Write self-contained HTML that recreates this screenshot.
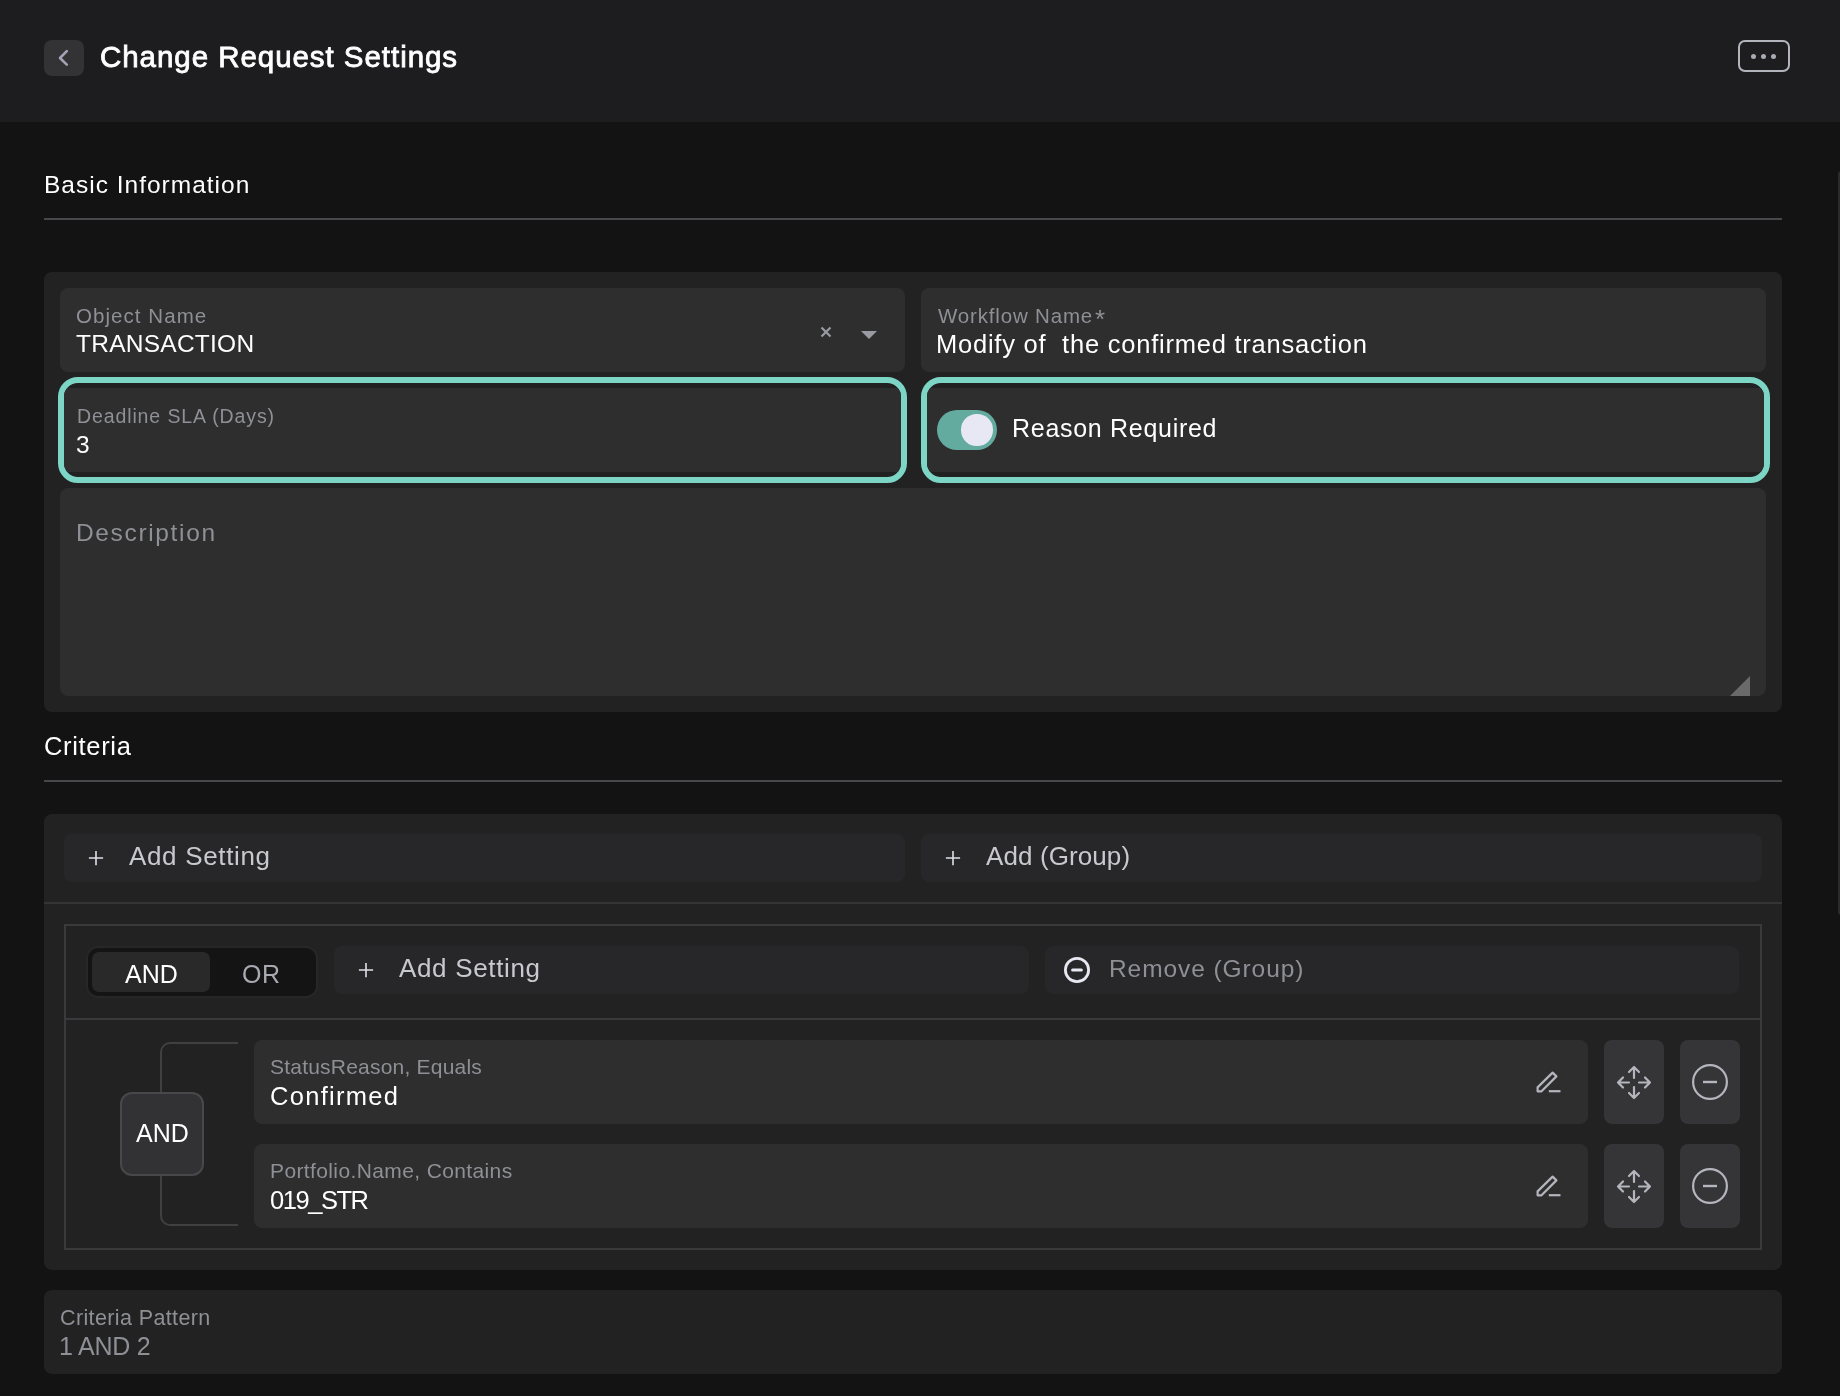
<!DOCTYPE html>
<html><head><meta charset="utf-8">
<style>
*{margin:0;padding:0;box-sizing:border-box}
html,body{width:1840px;height:1396px;overflow:hidden;background:#131313}
body{position:relative;font-family:"Liberation Sans",sans-serif;color:#fff}
.a{position:absolute}
.t{position:absolute;white-space:pre;line-height:1;will-change:transform}
.hdr{left:0;top:0;width:1840px;height:122px;background:#1d1d1f}
.panel{background:#222222;border-radius:8px}
.field{background:#2e2e2e;border-radius:8px}
.lbl{color:#8f9096}
.line{background:#48484c;height:2px}
.btn{background:#27272a;border-radius:8px}
.bt{color:#c8c8cf}
.ring{border:6px solid #7cd5c5;border-radius:20px;background:#212121;overflow:hidden}
.ring>div{position:absolute;left:0;top:5px;width:837px;height:84px;background:#2e2e2e}
.act{background:#353538;border-radius:8px}
</style></head><body>

<!-- header -->
<div class="a hdr"></div>
<div class="a" style="left:44px;top:40px;width:40px;height:36px;background:#333336;border-radius:8px"></div>
<svg class="a" style="left:44px;top:40px" width="40" height="36" viewBox="0 0 40 36"><path d="M22.8 11.2 L16 18 L22.8 24.6" fill="none" stroke="#a3a3b3" stroke-width="2.6" stroke-linecap="round" stroke-linejoin="round"/></svg>
<div class="t" style="left:100px;top:42px;font-size:29.5px;letter-spacing:0.95px;-webkit-text-stroke:0.8px #fff">Change Request Settings</div>
<div class="a" style="left:1738px;top:40px;width:52px;height:32px;border:2px solid #b3b5bd;border-radius:7px"></div>
<div class="a" style="left:1751px;top:54px;width:5px;height:5px;border-radius:50%;background:#a9abb3"></div>
<div class="a" style="left:1761px;top:54px;width:5px;height:5px;border-radius:50%;background:#a9abb3"></div>
<div class="a" style="left:1771px;top:54px;width:5px;height:5px;border-radius:50%;background:#a9abb3"></div>

<!-- Basic information -->
<div class="t" style="left:44px;top:173px;font-size:24.5px;letter-spacing:1px">Basic Information</div>
<div class="a line" style="left:44px;top:218px;width:1738px"></div>

<div class="a panel" style="left:44px;top:272px;width:1738px;height:440px"></div>
<div class="a field" style="left:60px;top:288px;width:845px;height:84px"></div>
<div class="t lbl" style="left:76px;top:305.5px;font-size:20.5px;letter-spacing:1.06px">Object Name</div>
<div class="t" style="left:76px;top:332px;font-size:24.5px;letter-spacing:0.25px">TRANSACTION</div>
<svg class="a" style="left:816px;top:322px" width="20" height="20" viewBox="0 0 20 20"><path d="M5.5 5.5 L14.5 14.5 M14.5 5.5 L5.5 14.5" stroke="#9a9aa2" stroke-width="2.2"/></svg>
<svg class="a" style="left:858px;top:328px" width="22" height="14" viewBox="0 0 22 14"><path d="M3 3 L19 3 L11 11 Z" fill="#9a9aa2"/></svg>

<div class="a field" style="left:921px;top:288px;width:845px;height:84px"></div>
<div class="t lbl" style="left:938px;top:305.5px;font-size:20.5px;letter-spacing:0.83px">Workflow Name</div>
<div class="t lbl" style="left:1095px;top:306px;font-size:26px">*</div>
<div class="t" style="left:936px;top:332.3px;font-size:25.5px;letter-spacing:0.77px">Modify of  the confirmed transaction</div>

<!-- deadline ring -->
<div class="a ring" style="left:58px;top:377px;width:849px;height:106px"><div></div></div>
<div class="t lbl" style="left:76.5px;top:407.4px;font-size:19.5px;letter-spacing:0.89px">Deadline SLA (Days)</div>
<div class="t" style="left:76px;top:433px;font-size:24.5px">3</div>

<div class="a ring" style="left:921px;top:377px;width:849px;height:106px"><div></div></div>
<div class="a" style="left:937px;top:410px;width:60px;height:40px;border-radius:20px;background:#64ab9f"></div>
<div class="a" style="left:961px;top:414px;width:31.5px;height:31.5px;border-radius:50%;background:#e8e8f5"></div>
<div class="t" style="left:1012.4px;top:416.3px;font-size:25px;letter-spacing:0.71px">Reason Required</div>

<div class="a field" style="left:60px;top:488px;width:1706px;height:208px"></div>
<div class="t lbl" style="left:75.5px;top:521.4px;font-size:24.5px;letter-spacing:1.65px">Description</div>
<svg class="a" style="left:1730px;top:676px" width="20" height="20" viewBox="0 0 20 20"><path d="M20 0 L20 20 L0 20 Z" fill="#6a6a6a"/></svg>

<!-- Criteria -->
<div class="t" style="left:43.8px;top:734.3px;font-size:25.5px;letter-spacing:0.67px">Criteria</div>
<div class="a line" style="left:44px;top:780px;width:1738px"></div>

<div class="a panel" style="left:44px;top:814px;width:1738px;height:456px"></div>
<div class="a btn" style="left:64px;top:834px;width:841px;height:48px"></div>
<svg class="a" style="left:88px;top:850px" width="16" height="16" viewBox="0 0 16 16"><path d="M8 1 V15.2 M0.9 8 H15.1" stroke="#e0e0e8" stroke-width="1.6"/></svg>
<div class="t bt" style="left:128.8px;top:843.4px;font-size:26px;letter-spacing:0.66px">Add Setting</div>
<div class="a btn" style="left:921px;top:834px;width:841px;height:48px"></div>
<svg class="a" style="left:945px;top:850px" width="16" height="16" viewBox="0 0 16 16"><path d="M8 1 V15.2 M0.9 8 H15.1" stroke="#e0e0e8" stroke-width="1.6"/></svg>
<div class="t bt" style="left:986px;top:843.4px;font-size:26px;letter-spacing:0.1px">Add (Group)</div>
<div class="a" style="left:44px;top:902px;width:1738px;height:2px;background:#343436"></div>

<!-- group -->
<div class="a" style="left:64px;top:924px;width:1698px;height:326px;border:2px solid #3a3a3c"></div>
<div class="a" style="left:88px;top:948px;width:228px;height:48px;background:#141414;border-radius:10px;box-shadow:0 0 0 2px #272727"></div>
<div class="a" style="left:92px;top:952px;width:118px;height:40px;background:#292929;border-radius:7px"></div>
<div class="t" style="left:125px;top:962px;font-size:25px">AND</div>
<div class="t" style="left:242px;top:962px;font-size:25px;letter-spacing:0.5px;color:#a9a9b1">OR</div>

<div class="a btn" style="left:334px;top:946px;width:695px;height:48px"></div>
<svg class="a" style="left:358px;top:962px" width="16" height="16" viewBox="0 0 16 16"><path d="M8 1 V15.2 M0.9 8 H15.1" stroke="#e0e0e8" stroke-width="1.6"/></svg>
<div class="t bt" style="left:398.7px;top:954.9px;font-size:26px;letter-spacing:0.66px">Add Setting</div>
<div class="a btn" style="left:1045px;top:946px;width:694px;height:48px"></div>
<svg class="a" style="left:1063px;top:956px" width="28" height="28" viewBox="0 0 28 28"><circle cx="14" cy="14" r="11.6" fill="none" stroke="#e8e8f2" stroke-width="2.8"/><path d="M9.6 14 H18.4" stroke="#e8e8f2" stroke-width="3" stroke-linecap="round"/></svg>
<div class="t lbl" style="left:1108.6px;top:957.4px;font-size:24.5px;letter-spacing:0.92px">Remove (Group)</div>
<div class="a" style="left:66px;top:1018px;width:1694px;height:2px;background:#3a3a3c"></div>

<!-- bracket -->
<div class="a" style="left:160px;top:1042px;width:78px;height:184px;border:2px solid #404042;border-right:none;border-radius:10px 0 0 10px"></div>
<div class="a" style="left:120px;top:1092px;width:84px;height:84px;background:#323235;border:2px solid #48484b;border-radius:12px"></div>
<div class="t" style="left:136px;top:1120.8px;font-size:25px">AND</div>

<!-- row 1 -->
<div class="a field" style="left:254px;top:1040px;width:1334px;height:84px"></div>
<div class="t lbl" style="left:269.8px;top:1055.5px;font-size:21px;letter-spacing:0.21px">StatusReason, Equals</div>
<div class="t" style="left:269.8px;top:1083.5px;font-size:25.5px;letter-spacing:1.3px">Confirmed</div>
<svg class="a" style="left:1532px;top:1068px" width="32" height="28" viewBox="0 0 32 28"><path d="M5.6 23.3 L5.6 19.4 L20.6 4.6 L24.4 8.4 L9.5 23.3 Z" fill="none" stroke="#b4b5bd" stroke-width="2.2" stroke-linejoin="round"/><path d="M16.8 23.2 H28.5" stroke="#b4b5bd" stroke-width="2.2"/></svg>
<div class="a act" style="left:1604px;top:1040px;width:60px;height:84px"></div>
<svg class="a" style="left:1616px;top:1065px" width="36" height="36" viewBox="0 0 36 36"><path d="M18 2 V13 M18 22 V33 M2 17.5 H13 M23 17.5 H34 M13 7 L18 2 L23 7 M13 28 L18 33 L23 28 M7 12.5 L2 17.5 L7 22.5 M29 12.5 L34 17.5 L29 22.5" fill="none" stroke="#b4b5bd" stroke-width="2.2" stroke-linecap="round" stroke-linejoin="round"/></svg>
<div class="a act" style="left:1680px;top:1040px;width:60px;height:84px"></div>
<svg class="a" style="left:1690px;top:1062px" width="40" height="40" viewBox="0 0 40 40"><circle cx="20" cy="20" r="16.9" fill="none" stroke="#b4b5bd" stroke-width="2.2"/><path d="M13 20 H27" stroke="#b4b5bd" stroke-width="2.4"/></svg>

<!-- row 2 -->
<div class="a field" style="left:254px;top:1144px;width:1334px;height:84px"></div>
<div class="t lbl" style="left:270.3px;top:1160.3px;font-size:21px;letter-spacing:0.38px">Portfolio.Name, Contains</div>
<div class="t" style="left:269.8px;top:1187.8px;font-size:25.5px;letter-spacing:-1.45px">019_STR</div>
<svg class="a" style="left:1532px;top:1172px" width="32" height="28" viewBox="0 0 32 28"><path d="M5.6 23.3 L5.6 19.4 L20.6 4.6 L24.4 8.4 L9.5 23.3 Z" fill="none" stroke="#b4b5bd" stroke-width="2.2" stroke-linejoin="round"/><path d="M16.8 23.2 H28.5" stroke="#b4b5bd" stroke-width="2.2"/></svg>
<div class="a act" style="left:1604px;top:1144px;width:60px;height:84px"></div>
<svg class="a" style="left:1616px;top:1169px" width="36" height="36" viewBox="0 0 36 36"><path d="M18 2 V13 M18 22 V33 M2 17.5 H13 M23 17.5 H34 M13 7 L18 2 L23 7 M13 28 L18 33 L23 28 M7 12.5 L2 17.5 L7 22.5 M29 12.5 L34 17.5 L29 22.5" fill="none" stroke="#b4b5bd" stroke-width="2.2" stroke-linecap="round" stroke-linejoin="round"/></svg>
<div class="a act" style="left:1680px;top:1144px;width:60px;height:84px"></div>
<svg class="a" style="left:1690px;top:1166px" width="40" height="40" viewBox="0 0 40 40"><circle cx="20" cy="20" r="16.9" fill="none" stroke="#b4b5bd" stroke-width="2.2"/><path d="M13 20 H27" stroke="#b4b5bd" stroke-width="2.4"/></svg>

<!-- pattern -->
<div class="a panel" style="left:44px;top:1290px;width:1738px;height:84px"></div>
<div class="t lbl" style="left:59.8px;top:1308.2px;font-size:21.5px;letter-spacing:0.38px">Criteria Pattern</div>
<div class="t lbl" style="left:58.8px;top:1333.8px;font-size:25px;letter-spacing:-0.23px">1 AND 2</div>

<!-- scrollbar -->
<div class="a" style="left:1838px;top:171px;width:6px;height:744px;background:#2b2b2b;border-radius:3px"></div>
</body></html>
